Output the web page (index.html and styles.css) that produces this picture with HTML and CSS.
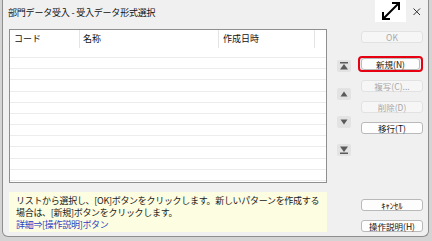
FILE: index.html
```html
<!DOCTYPE html>
<html lang="ja">
<head>
<meta charset="utf-8">
<link rel="stylesheet" href="styles.css">
</head>
<body>
<div class="window">
  <div class="titlebar">
    <div class="title">部門データ受入 - 受入データ形式選択</div>
    <div class="expand">
      <svg width="31" height="22" viewBox="0 0 31 22">
        <path d="M9 18 L23 4" stroke="#000" stroke-width="2" fill="none"/>
        <path d="M8 12 L8 19 L15 19" stroke="#000" stroke-width="2" fill="none"/>
        <path d="M17 3 L24 3 L24 10" stroke="#000" stroke-width="2" fill="none"/>
      </svg>
    </div>
    <div class="close">
      <svg width="22" height="22" viewBox="0 0 22 22">
        <path d="M7.5 8.5 L14 15 M14 8.5 L7.5 15" stroke="#333" stroke-width="1" fill="none"/>
      </svg>
    </div>
  </div>
  <div class="body">
    <div class="left">
      <div class="table">
        <div class="thead">
          <div class="th c1">コード</div>
          <div class="th c2">名称</div>
          <div class="th c3">作成日時</div>
          <div class="th c4"></div>
        </div>
        <div class="tbody">
          <div class="tr"></div><div class="tr"></div><div class="tr"></div><div class="tr"></div>
          <div class="tr"></div><div class="tr"></div><div class="tr"></div><div class="tr"></div>
          <div class="tr"></div><div class="tr"></div><div class="tr"></div><div class="tr"></div>
        </div>
      </div>
      <div class="info">
        <p>リストから選択し、[OK]ボタンをクリックします。新しいパターンを作成する</p>
        <p>場合は、[新規]ボタンをクリックします。</p>
        <p class="link">詳細⇒[操作説明]ボタン</p>
      </div>
    </div>
    <div class="arrows">
      <div class="abtn"><svg width="14" height="12" viewBox="0 0 14 12"><rect x="3" y="2" width="8" height="1.5" fill="#5a5a5a"/><path d="M3 9.5 L11 9.5 L7 4 Z" fill="#5a5a5a"/></svg></div>
      <div class="abtn"><svg width="14" height="12" viewBox="0 0 14 12"><path d="M3.5 8.5 L10.5 8.5 L7 3.5 Z" fill="#5a5a5a"/></svg></div>
      <div class="abtn"><svg width="14" height="12" viewBox="0 0 14 12"><path d="M3.5 3.5 L10.5 3.5 L7 8.5 Z" fill="#5a5a5a"/></svg></div>
      <div class="abtn"><svg width="14" height="12" viewBox="0 0 14 12"><path d="M3 2.5 L11 2.5 L7 8 Z" fill="#5a5a5a"/><rect x="3" y="8.5" width="8" height="1.5" fill="#5a5a5a"/></svg></div>
    </div>
    <div class="buttons">
      <div class="btn disabled b-ok">OK</div>
      <div class="hl"><div class="btn">新規(N)</div></div>
      <div class="btn disabled b-copy">複写(C)...</div>
      <div class="btn disabled">削除(D)</div>
      <div class="btn">移行(T)</div>
      <div class="bottom">
        <div class="btn">ｷｬﾝｾﾙ</div>
        <div class="btn">操作説明(H)</div>
      </div>
    </div>
  </div>
</div>
</body>
</html>
```

FILE: styles.css
```css
* { box-sizing: border-box; }
html, body { margin: 0; padding: 0; }
body {
  width: 432px;
  height: 241px;
  background: #d4d4d4;
  font-family: "Noto Sans CJK JP", "Noto Sans", sans-serif;
  color: #222;
  overflow: hidden;
}
.window {
  margin-left: 2px;
  width: 427px;
  height: 237px;
  background: #f0f0f0;
  border: 1px solid #8e8e8e;
  border-top: none;
  border-radius: 0 0 6px 6px;
  display: flex;
  flex-direction: column;
}
.titlebar {
  height: 26px;
  display: flex;
  align-items: flex-start;
}
.title {
  font-size: 9px;
  line-height: 26px;
  padding-left: 5px;
  color: #111;
  flex: 1;
  letter-spacing: -0.2px;
}
.expand {
  width: 31px;
  height: 22px;
  background: #fff;
}
.expand svg, .close svg { display: block; }
.close {
  width: 22px;
  height: 22px;
}
.body {
  flex: 1;
  display: flex;
  padding: 3px 0 4px 6px;
}
.left {
  width: 318px;
  display: flex;
  flex-direction: column;
}
.table {
  height: 154px;
  background: #fff;
  border: 1px solid #8f8f8f;
  overflow: hidden;
}
.thead {
  display: flex;
  height: 16.8px;
}
.th {
  font-size: 9px;
  line-height: 18px;
  color: #111;
  border-right: 1px solid #e4e4e4;
  height: 18px;
}
.c1 { width: 70px; padding-left: 4px; }
.c2 { width: 139px; padding-left: 3px; }
.c3 { width: 96px; padding-left: 4px; }
.c4 { flex: 1; border-right: none; }
.tr {
  height: 11.2px;
  border-bottom: 1px solid #ececec;
}
.info {
  margin-top: 9px;
  height: 40px;
  background: #fdfde1;
  padding: 3px 0 0 7px;
  font-size: 9px;
  line-height: 12px;
  color: #1a1a1a;
  letter-spacing: -0.3px;
}
.info p { margin: 0; white-space: nowrap; }
.info .link { color: #2b3fc4; }
.arrows {
  width: 14px;
  margin-left: 10px;
  padding-top: 31px;
  display: flex;
  flex-direction: column;
  gap: 16px;
}
.abtn {
  width: 14px;
  height: 12px;
  background: #e3e3e3;
  border-radius: 2px;
}
.abtn svg { display: block; }
.buttons {
  width: 62px;
  margin-left: 10px;
  display: flex;
  flex-direction: column;
  padding-top: 2px;
}
.btn {
  height: 12px;
  background: #fdfdfd;
  border: 1px solid #b9b9b9;
  border-radius: 3px;
  font-size: 8.5px;
  line-height: 10px;
  text-align: center;
  color: #111;
  margin-bottom: 9px;
  white-space: nowrap;
}
.btn.disabled {
  background: #f6f6f6;
  border-color: #e2e2e2;
  color: #a8a8a8;
}
.b-ok { margin-bottom: 13px; }
.hl {
  margin-left: -3px;
  width: 65px;
  border: 2px solid #e60012;
  border-radius: 4px;
  padding: 0 1px;
  margin-bottom: 8px;
}
.hl .btn { margin-bottom: 0; width: 59px; }
.bottom {
  margin-top: auto;
  display: flex;
  flex-direction: column;
}
.bottom .btn:last-child { margin-bottom: 0; }
```
